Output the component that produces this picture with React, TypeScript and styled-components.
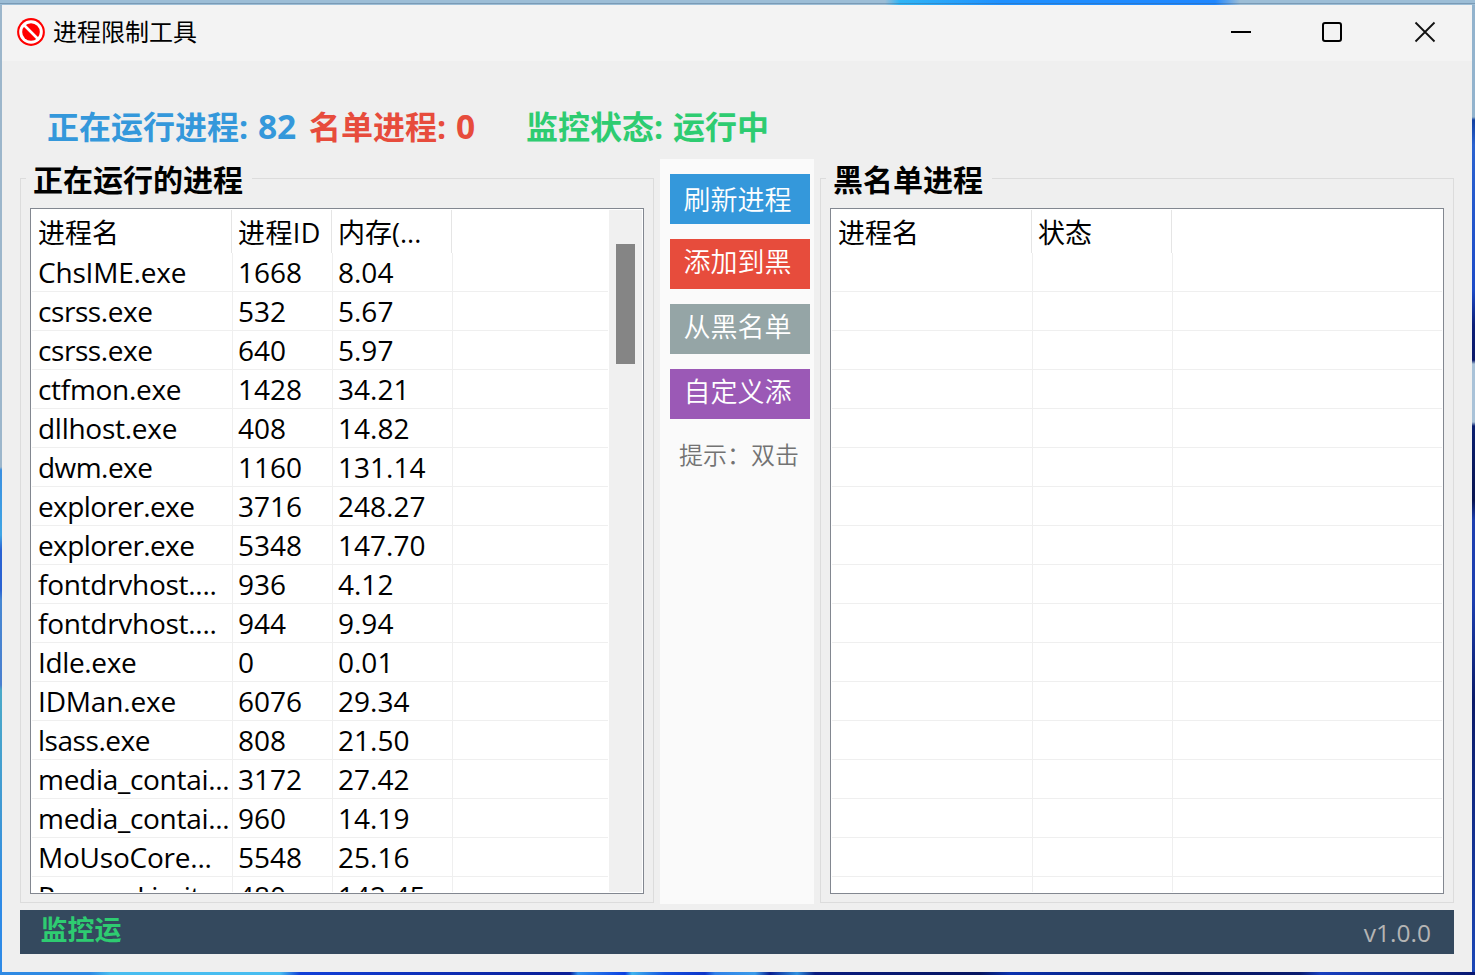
import React from "react";
import styled, { createGlobalStyle } from "styled-components";

const Global = createGlobalStyle`
  * { box-sizing: border-box; }
  html, body { margin: 0; padding: 0; }
  body {
    width: 1475px;
    height: 975px;
    overflow: hidden;
    font-family: "Open Sans", "Noto Sans CJK SC", sans-serif;
    color: #000;
  }
`;

const Desktop = styled.div`
  width: 1475px;
  height: 975px;
  padding: 5px 3px 3px 2px;
  background:
    linear-gradient(rgba(60, 90, 120, 0.35), rgba(60, 90, 120, 0.35)) 0 3px / 100% 1px no-repeat,
    linear-gradient(90deg, transparent 885px, #2fb4f5 900px, #1e90ff 1000px, #1e86ff 1215px, transparent 1240px) 0 0 / 100% 5px no-repeat,
    linear-gradient(#9cbdd6, #9cbdd6) 0 0 / 100% 5px no-repeat,
    linear-gradient(90deg, #2f8ae4 0, #2f8ae4 90px, #48bdf0 110px, #48bdf0 280px, #1240d8 300px, #0a1f98 560px, #0a1f98 570px, #2f90ee 578px, #0c3fe0 625px, #3fb4ee 632px, #1450e0 665px, #0d35c8 705px, #2f80e8 715px, #3a9bea 755px, #0a1f90 770px, #2f90e0 797px, #0a1c80 815px, #061560 980px, #0a32b0 1010px, #061560 1180px, #0a1c70 1300px, #1840c0 1320px, #081870 1475px) 0 100% / 100% 3px no-repeat,
    linear-gradient(#9cb6cb 0, #9cb6cb 467px, #3a8fe0 470px, #3fa5e4 535px, #2a62d2 550px, #2a62d2 590px, #4687d2 600px, #4a7fcf 685px, #4aa9c8 690px, #3f98d4 815px, #2e8ae6 900px) 0 0 / 2px 100% no-repeat,
    linear-gradient(#92b3cd 0, #92b3cd 117px, #1240a0 120px, #2a62d0 145px, #1c4bc8 290px, #0c1f78 325px, #0a1868 360px, #a9c2d8 364px, #a9c2d8 422px, #0a1f70 426px, #081450 500px, #1c3fb0 520px, #1c3fb0 600px, #0a1a68 700px, #1c48b8 975px) 100% 0 / 3px 100% no-repeat;
`;

const Window = styled.main`
  display: flex;
  flex-direction: column;
  width: 1470px;
  height: 967px;
  background: #efefef;
`;

const TitleBar = styled.header`
  display: flex;
  align-items: center;
  height: 56px;
  padding: 0 36px 2px 15px;
  background: #f3f3f3;
`;

const AppTitle = styled.h1`
  flex: 1;
  margin: 0 0 0 8px;
  font-size: 24px;
  line-height: 32px;
  font-weight: 400;
`;

const WindowControls = styled.div`
  display: flex;
  gap: 70px;
  align-items: center;
`;

const Stats = styled.div`
  display: grid;
  grid-template-columns: 262px 217px 1fr;
  height: 98px;
  padding: 43px 0 0 45px;
`;

const Stat = styled.span<{ $color: string }>`
  font-size: 32px;
  line-height: 46px;
  font-weight: 700;
  white-space: nowrap;
  word-spacing: 1.5px;
  color: ${(p) => p.$color};
`;

const Count = styled.span`
  font-size: 33.5px;
  line-height: 1;
`;

const Body = styled.div`
  display: grid;
  grid-template-columns: 634px 154px 634px;
  column-gap: 6px;
  height: 745px;
  padding-left: 18px;
`;

const Group = styled.fieldset`
  display: flex;
  flex-direction: column;
  min-width: 0;
  margin: 0;
  height: 744px;
  padding: 10px 9px 8px;
  border: 1px solid #dcdcdc;
`;

const Legend = styled.legend`
  height: 39px;
  margin-left: -4px;
  padding: 0 9px 0 7px;
  font-size: 30px;
  line-height: 42px;
  font-weight: 700;
`;

const Table = styled.div`
  display: flex;
  height: 686px;
  padding: 1px;
  border: 1px solid #828790;
  background: #fff;
  overflow: hidden;
`;

const Grid = styled.div`
  flex: 1;
  height: 682px;
  overflow: hidden;
`;

const HeaderRow = styled.div<{ $cols: string }>`
  display: grid;
  grid-template-columns: ${(p) => p.$cols};
  height: 43px;
`;

const HeaderCell = styled.div<{ $spacing?: number }>`
  height: 43px;
  padding-left: 6px;
  border-right: 1px solid #e5e5e5;
  font-size: 27px;
  line-height: 46px;
  letter-spacing: ${(p) => p.$spacing ?? 0}px;
  white-space: nowrap;
`;

const Row = styled.div<{ $cols: string }>`
  display: grid;
  grid-template-columns: ${(p) => p.$cols};
  height: 39px;
  border-bottom: 1px solid #efefef;
`;

const Cell = styled.div<{ $inset?: number; $spacing?: number }>`
  padding-left: ${(p) => p.$inset ?? 5}px;
  border-right: 1px solid #efefef;
  font-size: 28px;
  line-height: 38px;
  letter-spacing: ${(p) => p.$spacing ?? 0}px;
  white-space: nowrap;
`;

const ScrollTrack = styled.div`
  width: 33px;
  height: 682px;
  margin-left: 1px;
  padding: 34px 0 0 7px;
  background: #f0f0f0;
`;

const ScrollThumb = styled.div`
  width: 19px;
  height: 120px;
  background: #858585;
`;

const Actions = styled.div`
  display: flex;
  flex-direction: column;
  gap: 15px;
  padding: 15px 4px 0 10px;
  background: #fafafa;
`;

const ActionButton = styled.button<{ $bg: string; $lift?: number }>`
  height: 50px;
  padding: 0 0 ${(p) => p.$lift ?? 7}px 13.5px;
  border: 0;
  background: ${(p) => p.$bg};
  color: #fff;
  font: 350 27px/40px "Noto Sans CJK SC", sans-serif;
  text-align: left;
  white-space: nowrap;
  overflow: hidden;
`;

const Tip = styled.p`
  margin: 2px 0 0 9px;
  font: 350 24px/36px "Noto Sans CJK SC", sans-serif;
  color: #737373;
  white-space: nowrap;
`;

const Footer = styled.footer`
  display: flex;
  justify-content: space-between;
  height: 44px;
  margin: 6px 18px 0 18px;
  padding: 0 23px 0 20.5px;
  background: #34495e;
`;

const Monitor = styled.span`
  font-size: 27px;
  line-height: 40px;
  font-weight: 700;
  color: #2ecc71;
`;

const Version = styled.span`
  font-size: 24.5px;
  line-height: 46px;
  color: #b4b4b4;
`;

const processes: [string, string, string, number][] = [
  ["ChsIME.exe", "1668", "8.04", -0.2],
  ["csrss.exe", "532", "5.67", -0.42],
  ["csrss.exe", "640", "5.97", -0.42],
  ["ctfmon.exe", "1428", "34.21", -0.3],
  ["dllhost.exe", "408", "14.82", -0.27],
  ["dwm.exe", "1160", "131.14", -0.55],
  ["explorer.exe", "3716", "248.27", -0.6],
  ["explorer.exe", "5348", "147.70", -0.6],
  ["fontdrvhost....", "936", "4.12", -0.28],
  ["fontdrvhost....", "944", "9.94", -0.28],
  ["Idle.exe", "0", "0.01", -0.35],
  ["IDMan.exe", "6076", "29.34", -0.15],
  ["lsass.exe", "808", "21.50", -0.45],
  ["media_contai...", "3172", "27.42", -0.29],
  ["media_contai...", "960", "14.19", -0.29],
  ["MoUsoCore...", "5548", "25.16", -0.22],
  ["ProcessLimit...", "480", "142.45", -0.28],
];

const leftHead = "200px 100px 120px 1fr";
const leftRow = "201px 100px 120px 1fr";
const rightHead = "200px 140px 1fr";
const rightRow = "201px 140px 1fr";

const blankRows = Array.from({ length: 17 }, (_, i) => i);

export default function App() {
  return (
    <>
      <Global />
      <Desktop>
        <Window>
          <TitleBar>
            <svg width="28" height="28" viewBox="0 0 28 28">
              <circle cx="14" cy="14" r="13.9" fill="#f00" />
              <circle cx="14" cy="14" r="11.8" fill="#fff" />
              <circle cx="14" cy="14" r="8.8" fill="#f00" />
              <path d="M6.5 6.5 21.5 21.5" stroke="#fff" strokeWidth="2.6" />
            </svg>
            <AppTitle>进程限制工具</AppTitle>
            <WindowControls>
              <svg width="22" height="22" viewBox="0 0 22 22">
                <path d="M1 11h20" stroke="#000" strokeWidth="2" />
              </svg>
              <svg width="22" height="22" viewBox="0 0 22 22">
                <rect x="1" y="2" width="18" height="18" rx="2" fill="none" stroke="#000" strokeWidth="2" />
              </svg>
              <svg width="22" height="22" viewBox="0 0 22 22">
                <path d="M1.5 1.5 20.5 20.5M20.5 1.5 1.5 20.5" stroke="#111" strokeWidth="1.8" />
              </svg>
            </WindowControls>
          </TitleBar>
          <Stats>
            <Stat $color="#3498db">正在运行进程: <Count>82</Count></Stat>
            <Stat $color="#e74c3c">名单进程: <Count>0</Count></Stat>
            <Stat $color="#2ecc71">监控状态: 运行中</Stat>
          </Stats>
          <Body>
            <Group>
              <Legend>正在运行的进程</Legend>
              <Table>
                <Grid>
                  <HeaderRow $cols={leftHead}>
                    <HeaderCell>进程名</HeaderCell>
                    <HeaderCell $spacing={0.4}>进程ID</HeaderCell>
                    <HeaderCell>内存(...</HeaderCell>
                  </HeaderRow>
                  {processes.map(([name, pid, memory, spacing], i) => (
                    <Row key={i} $cols={leftRow}>
                      <Cell $inset={6} $spacing={spacing}>{name}</Cell>
                      <Cell>{pid}</Cell>
                      <Cell>{memory}</Cell>
                    </Row>
                  ))}
                </Grid>
                <ScrollTrack><ScrollThumb /></ScrollTrack>
              </Table>
            </Group>
            <Actions>
              <ActionButton $bg="#3498db" $lift={1}>刷新进程</ActionButton>
              <ActionButton $bg="#e74c3c">添加到黑</ActionButton>
              <ActionButton $bg="#95a5a6">从黑名单</ActionButton>
              <ActionButton $bg="#9b59b6">自定义添</ActionButton>
              <Tip>提示：双击</Tip>
            </Actions>
            <Group>
              <Legend>黑名单进程</Legend>
              <Table>
                <Grid>
                  <HeaderRow $cols={rightHead}>
                    <HeaderCell>进程名</HeaderCell>
                    <HeaderCell>状态</HeaderCell>
                  </HeaderRow>
                  {blankRows.map((i) => (
                    <Row key={i} $cols={rightRow}>
                      <Cell />
                      <Cell />
                    </Row>
                  ))}
                </Grid>
              </Table>
            </Group>
          </Body>
          <Footer>
            <Monitor>监控运</Monitor>
            <Version>v1.0.0</Version>
          </Footer>
        </Window>
      </Desktop>
    </>
  );
}
